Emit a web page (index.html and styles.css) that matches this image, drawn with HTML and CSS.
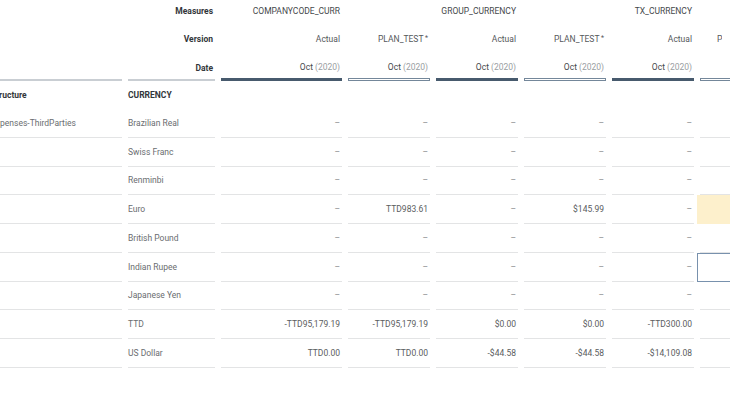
FILE: index.html
```html
<!DOCTYPE html>
<html>
<head>
<meta charset="utf-8">
<link rel="stylesheet" href="styles.css">
</head>
<body>
<div class="table">
  <div class="row hrow">
    <div class="cell ca"><div class="in"></div></div>
    <div class="cell cb"><div class="in"><span class="hlabel">Measures</span></div></div>
    <div class="cell cw"><div class="in"><span class="measure">COMPANYCODE_CURR</span></div></div>
    <div class="cell cn"><div class="in"></div></div>
    <div class="cell cn"><div class="in"><span class="measure">GROUP_CURRENCY</span></div></div>
    <div class="cell cn"><div class="in"></div></div>
    <div class="cell cn"><div class="in"><span class="measure">TX_CURRENCY</span></div></div>
    <div class="cell ch"><div class="in"></div></div>
  </div>
  <div class="row hrow">
    <div class="cell ca"><div class="in"></div></div>
    <div class="cell cb"><div class="in"><span class="hlabel">Version</span></div></div>
    <div class="cell cw"><div class="in"><span class="ver">Actual</span></div></div>
    <div class="cell cn"><div class="in"><span class="ver">PLAN_TEST<sup class="star">*</sup></span></div></div>
    <div class="cell cn"><div class="in"><span class="ver">Actual</span></div></div>
    <div class="cell cn"><div class="in"><span class="ver">PLAN_TEST<sup class="star">*</sup></span></div></div>
    <div class="cell cn"><div class="in"><span class="ver">Actual</span></div></div>
    <div class="cell ch"><div class="in peek"><span class="ver clip">PLAN_TEST</span></div></div>
  </div>
  <div class="row hrow daterow">
    <div class="cell ca"><div class="in col"><div class="txt"></div><div class="bar thin"></div></div></div>
    <div class="cell cb"><div class="in col"><div class="txt"><span class="hlabel">Date</span></div><div class="bar thin"></div></div></div>
    <div class="cell cw"><div class="in col"><div class="txt"><span class="date">Oct <span class="yr">(2020)</span></span></div><div class="bar solid"></div></div></div>
    <div class="cell cn"><div class="in col"><div class="txt"><span class="date">Oct <span class="yr">(2020)</span></span></div><div class="bar outline"></div></div></div>
    <div class="cell cn"><div class="in col"><div class="txt"><span class="date">Oct <span class="yr">(2020)</span></span></div><div class="bar solid"></div></div></div>
    <div class="cell cn"><div class="in col"><div class="txt"><span class="date">Oct <span class="yr">(2020)</span></span></div><div class="bar outline"></div></div></div>
    <div class="cell cn"><div class="in col"><div class="txt"><span class="date">Oct <span class="yr">(2020)</span></span></div><div class="bar solid"></div></div></div>
    <div class="cell ch"><div class="in col"><div class="txt"></div><div class="bar outline"></div></div></div>
  </div>
  <div class="row hrow">
    <div class="cell ca"><div class="in left"><span class="hlabel">Structure</span></div></div>
    <div class="cell cb"><div class="in left"><span class="hlabel">CURRENCY</span></div></div>
    <div class="cell cw"><div class="in"></div></div>
    <div class="cell cn"><div class="in"></div></div>
    <div class="cell cn"><div class="in"></div></div>
    <div class="cell cn"><div class="in"></div></div>
    <div class="cell cn"><div class="in"></div></div>
    <div class="cell ch"><div class="in"></div></div>
  </div>

  <div class="row drow">
    <div class="cell ca"><div class="in left line"><span class="lbl">Expenses-ThirdParties</span></div></div>
    <div class="cell cb"><div class="in left line"><span class="lbl">Brazilian Real</span></div></div>
    <div class="cell cw"><div class="in line"><span class="dash">–</span></div></div>
    <div class="cell cn"><div class="in line"><span class="dash">–</span></div></div>
    <div class="cell cn"><div class="in line"><span class="dash">–</span></div></div>
    <div class="cell cn"><div class="in line"><span class="dash">–</span></div></div>
    <div class="cell cn"><div class="in line"><span class="dash">–</span></div></div>
    <div class="cell ch"><div class="in line"></div></div>
  </div>
  <div class="row drow">
    <div class="cell ca"><div class="in left line"></div></div>
    <div class="cell cb"><div class="in left line"><span class="lbl">Swiss Franc</span></div></div>
    <div class="cell cw"><div class="in line"><span class="dash">–</span></div></div>
    <div class="cell cn"><div class="in line"><span class="dash">–</span></div></div>
    <div class="cell cn"><div class="in line"><span class="dash">–</span></div></div>
    <div class="cell cn"><div class="in line"><span class="dash">–</span></div></div>
    <div class="cell cn"><div class="in line"><span class="dash">–</span></div></div>
    <div class="cell ch"><div class="in line"></div></div>
  </div>
  <div class="row drow">
    <div class="cell ca"><div class="in left line"></div></div>
    <div class="cell cb"><div class="in left line"><span class="lbl">Renminbi</span></div></div>
    <div class="cell cw"><div class="in line"><span class="dash">–</span></div></div>
    <div class="cell cn"><div class="in line"><span class="dash">–</span></div></div>
    <div class="cell cn"><div class="in line"><span class="dash">–</span></div></div>
    <div class="cell cn"><div class="in line"><span class="dash">–</span></div></div>
    <div class="cell cn"><div class="in line"><span class="dash">–</span></div></div>
    <div class="cell ch"><div class="in line"></div></div>
  </div>
  <div class="row drow">
    <div class="cell ca"><div class="in left line"></div></div>
    <div class="cell cb"><div class="in left line"><span class="lbl">Euro</span></div></div>
    <div class="cell cw"><div class="in line"><span class="dash">–</span></div></div>
    <div class="cell cn"><div class="in line"><span class="val">TTD983.61</span></div></div>
    <div class="cell cn"><div class="in line"><span class="dash">–</span></div></div>
    <div class="cell cn"><div class="in line"><span class="val">$145.99</span></div></div>
    <div class="cell cn"><div class="in line"><span class="dash">–</span></div></div>
    <div class="cell ch changed"><div class="in"></div></div>
  </div>
  <div class="row drow">
    <div class="cell ca"><div class="in left line"></div></div>
    <div class="cell cb"><div class="in left line"><span class="lbl">British Pound</span></div></div>
    <div class="cell cw"><div class="in line"><span class="dash">–</span></div></div>
    <div class="cell cn"><div class="in line"><span class="dash">–</span></div></div>
    <div class="cell cn"><div class="in line"><span class="dash">–</span></div></div>
    <div class="cell cn"><div class="in line"><span class="dash">–</span></div></div>
    <div class="cell cn"><div class="in line"><span class="dash">–</span></div></div>
    <div class="cell ch"><div class="in line"></div></div>
  </div>
  <div class="row drow">
    <div class="cell ca"><div class="in left line"></div></div>
    <div class="cell cb"><div class="in left line"><span class="lbl">Indian Rupee</span></div></div>
    <div class="cell cw"><div class="in line"><span class="dash">–</span></div></div>
    <div class="cell cn"><div class="in line"><span class="dash">–</span></div></div>
    <div class="cell cn"><div class="in line"><span class="dash">–</span></div></div>
    <div class="cell cn"><div class="in line"><span class="dash">–</span></div></div>
    <div class="cell cn"><div class="in line"><span class="dash">–</span></div></div>
    <div class="cell ch selected"><div class="in"></div></div>
  </div>
  <div class="row drow">
    <div class="cell ca"><div class="in left line"></div></div>
    <div class="cell cb"><div class="in left line"><span class="lbl">Japanese Yen</span></div></div>
    <div class="cell cw"><div class="in line"><span class="dash">–</span></div></div>
    <div class="cell cn"><div class="in line"><span class="dash">–</span></div></div>
    <div class="cell cn"><div class="in line"><span class="dash">–</span></div></div>
    <div class="cell cn"><div class="in line"><span class="dash">–</span></div></div>
    <div class="cell cn"><div class="in line"><span class="dash">–</span></div></div>
    <div class="cell ch"><div class="in line"></div></div>
  </div>
  <div class="row drow">
    <div class="cell ca"><div class="in left line"></div></div>
    <div class="cell cb"><div class="in left line"><span class="lbl">TTD</span></div></div>
    <div class="cell cw"><div class="in line"><span class="val">-TTD95,179.19</span></div></div>
    <div class="cell cn"><div class="in line"><span class="val">-TTD95,179.19</span></div></div>
    <div class="cell cn"><div class="in line"><span class="val">$0.00</span></div></div>
    <div class="cell cn"><div class="in line"><span class="val">$0.00</span></div></div>
    <div class="cell cn"><div class="in line"><span class="val">-TTD300.00</span></div></div>
    <div class="cell ch"><div class="in line"></div></div>
  </div>
  <div class="row drow">
    <div class="cell ca"><div class="in left line"></div></div>
    <div class="cell cb"><div class="in left line"><span class="lbl">US Dollar</span></div></div>
    <div class="cell cw"><div class="in line"><span class="val">TTD0.00</span></div></div>
    <div class="cell cn"><div class="in line"><span class="val">TTD0.00</span></div></div>
    <div class="cell cn"><div class="in line"><span class="val">-$44.58</span></div></div>
    <div class="cell cn"><div class="in line"><span class="val">-$44.58</span></div></div>
    <div class="cell cn"><div class="in line"><span class="val">-$14,109.08</span></div></div>
    <div class="cell ch"><div class="in line"></div></div>
  </div>
</div>
</body>
</html>
```

FILE: styles.css
```css
html, body {
  margin: 0;
  padding: 0;
  background: #ffffff;
  overflow: hidden;
}
body {
  width: 730px;
  height: 410px;
  font-family: Roboto, "Liberation Sans", Arial, sans-serif;
  font-size: 8.5px;
  color: #6a6d70;
}
.table {
  margin-top: -3px;
  margin-left: -12px;
  width: 742px;
  overflow: hidden;
}
.row {
  display: flex;
}
.hrow {
  height: 28px;
}
.drow {
  height: 28.75px;
}
.cell {
  box-sizing: border-box;
  padding: 0 3px;
  height: 100%;
  flex: none;
}
.ca { width: 137px; }
.cb { width: 93px; }
.cw { width: 127px; }
.cn { width: 88px; }
.ch { width: 76px; }
.in {
  box-sizing: border-box;
  height: 100%;
  display: flex;
  align-items: center;
  justify-content: flex-end;
  padding-right: 2px;
  white-space: nowrap;
}
.in.left {
  justify-content: flex-start;
  padding-right: 0;
}
.in.line {
  border-bottom: 1px solid #e3e4e5;
}
.in.col {
  flex-direction: column;
  align-items: stretch;
  padding-right: 0;
}
.in.peek {
  justify-content: flex-start;
  padding-left: 17px;
}
.clip {
  display: inline-block;
  width: 4.5px;
  overflow: hidden;
}
.txt {
  flex: 1;
  display: flex;
  align-items: center;
  justify-content: flex-end;
  padding-right: 2px;
  padding-top: 3px;
}
.bar {
  box-sizing: border-box;
  height: 3px;
  flex: none;
}
.bar.thin {
  height: 2px;
  background: #c9ced3;
}
.bar.solid {
  background: #475a6d;
}
.bar.outline {
  border: 1px solid #74879a;
  background: #ffffff;
}
.hlabel {
  font-weight: bold;
  color: #32363a;
}
.measure {
  color: #45484b;
}
.ver {
  color: #55585b;
}
.star {
  font-size: 7px;
  vertical-align: 2px;
  margin-left: 1.5px;
}
.date {
  color: #45484b;
}
.yr {
  color: #9a9ea2;
}
.lbl {
  color: #6a6d70;
}
.val {
  color: #5a5d60;
}
.dash {
  color: #8a8d90;
}
.changed {
  background: #fdf0cc;
}
.selected {
  box-shadow: inset 0 0 0 1px #7891ad;
}
```
